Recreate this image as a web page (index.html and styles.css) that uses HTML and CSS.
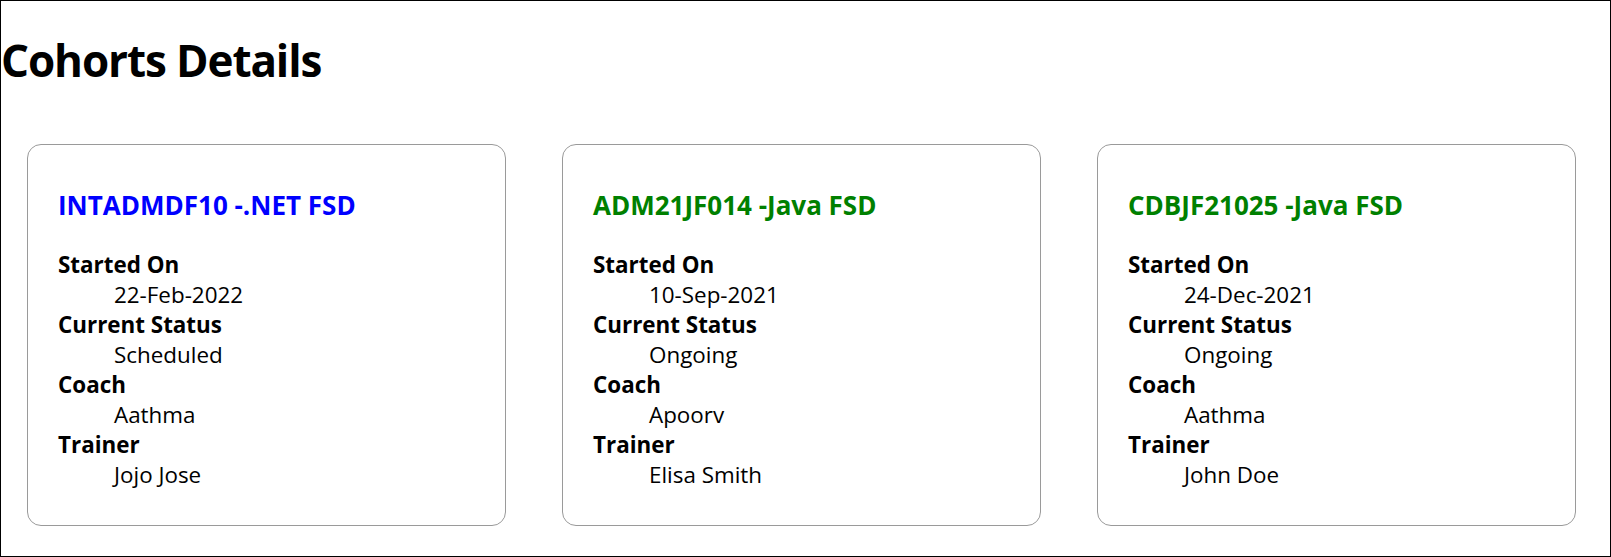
FILE: index.html
```html
<!DOCTYPE html>
<html lang="en">
<head>
<meta charset="utf-8">
<title>Cohorts Details</title>
<link rel="stylesheet" href="styles.css">
</head>
<body>
<div class="frame">
  <h1 class="page-title">Cohorts Details</h1>
  <div class="cards">
    <div class="card">
      <h3 class="card-title blue">INTADMDF10 -.NET FSD</h3>
      <dl class="details">
        <dt>Started On</dt><dd>22-Feb-2022</dd>
        <dt>Current Status</dt><dd>Scheduled</dd>
        <dt>Coach</dt><dd>Aathma</dd>
        <dt>Trainer</dt><dd>Jojo Jose</dd>
      </dl>
    </div>
    <div class="card">
      <h3 class="card-title green">ADM21JF014 -Java FSD</h3>
      <dl class="details">
        <dt>Started On</dt><dd>10-Sep-2021</dd>
        <dt>Current Status</dt><dd>Ongoing</dd>
        <dt>Coach</dt><dd>Apoorv</dd>
        <dt>Trainer</dt><dd>Elisa Smith</dd>
      </dl>
    </div>
    <div class="card">
      <h3 class="card-title green">CDBJF21025 -Java FSD</h3>
      <dl class="details">
        <dt>Started On</dt><dd>24-Dec-2021</dd>
        <dt>Current Status</dt><dd>Ongoing</dd>
        <dt>Coach</dt><dd>Aathma</dd>
        <dt>Trainer</dt><dd>John Doe</dd>
      </dl>
    </div>
  </div>
</div>
</body>
</html>
```
FILE: styles.css
```css
html, body {
  margin: 0;
  padding: 0;
  background: #fff;
}
body {
  font-family: "Open Sans", "Noto Sans", sans-serif;
  color: #000;
}
.frame {
  box-sizing: border-box;
  width: 1611px;
  height: 557px;
  border: 1px solid #000;
  overflow: hidden;
}
.page-title {
  font-size: 44px;
  font-weight: 700;
  letter-spacing: -1.1px;
  line-height: 60px;
  margin: 29px 0 0 0;
  padding-left: 0;
}
.cards {
  display: flex;
  gap: 56px;
  padding-left: 26px;
  margin-top: 54px;
}
.card {
  box-sizing: border-box;
  width: 479px;
  border: 1px solid #9a9a9a;
  border-radius: 14px;
  padding: 44px 30px 35px 30px;
}
.card-title {
  font-size: 26px;
  font-weight: 700;
  line-height: 32px;
  margin: 0 0 29px 0;
}
.blue { color: #0000ff; }
.green { color: #008000; }
.details {
  margin: 0;
  font-size: 22.4px;
  line-height: 30px;
}
.details dt {
  font-weight: 700;
}
.details dd {
  margin: 0 0 0 56px;
}
```
